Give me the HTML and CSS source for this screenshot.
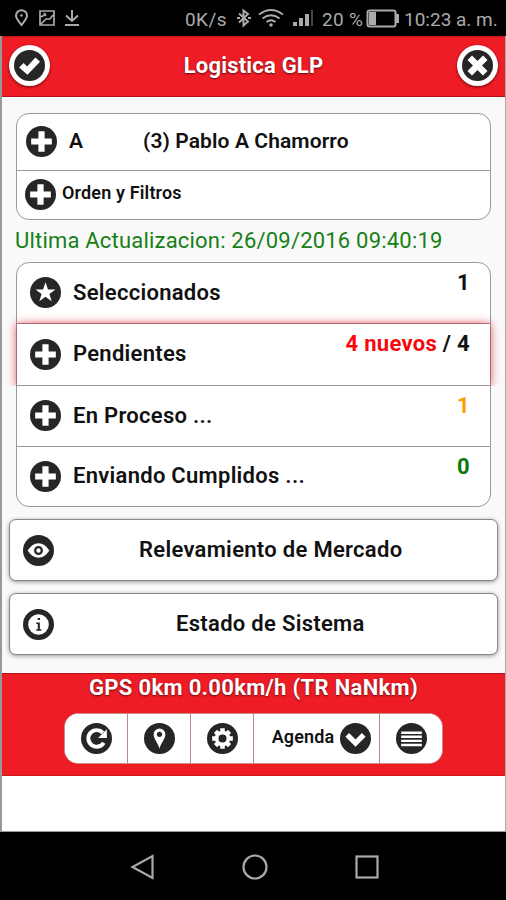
FILE: index.html
```html
<!DOCTYPE html>
<html lang="es">
<head>
<meta charset="utf-8">
<title>Logistica GLP</title>
<link rel="stylesheet" href="styles.css">
</head>
<body>
<svg width="0" height="0" class="defs">
  <symbol id="plus" viewBox="0 0 30 30"><circle cx="15" cy="15" r="15" fill="#262626"/><path d="M12 5h6v7h7v6h-7v7h-6v-7H5v-6h7z" fill="#fff"/></symbol>
  <symbol id="star" viewBox="0 0 30 30"><circle cx="15" cy="15" r="15" fill="#262626"/><path d="M15 5l2.400 7h7.300l-5.900 4.400 2.200 7.100-6-4.300-6 4.300 2.200-7.100L5.300 12h7.300z" fill="#fff"/></symbol>
  <symbol id="check" viewBox="0 0 30 30"><circle cx="15" cy="15" r="15" fill="#262626"/><path d="M5 17l4.300-4.300 3.400 3.200 8-8.600 4.500 4L13 24z" fill="#fff"/></symbol>
  <symbol id="cross" viewBox="0 0 30 30"><circle cx="15" cy="15" r="15" fill="#262626"/><path d="M7.500 7.500l15 15M22.500 7.500l-15 15" stroke="#fff" stroke-width="6.200"/></symbol>
  <symbol id="eye" viewBox="0 0 30 30"><circle cx="15" cy="15" r="15" fill="#262626"/><path d="M4.500 15Q9 8 15 8t10.500 7Q21 22 15 22T4.500 15z" fill="#fff"/><circle cx="15" cy="15" r="3.200" fill="#fff" stroke="#262626" stroke-width="2.200"/></symbol>
  <symbol id="info" viewBox="0 0 30 30"><circle cx="15" cy="15" r="12.500" fill="#fff" stroke="#262626" stroke-width="5"/><path d="M14.200 8.700h2.300v2h-2.300zM12.800 13h3.500v6.700h1.500V21h-5v-1.300h1.500v-5.300h-1.500z" fill="#262626"/></symbol>
  <symbol id="reload" viewBox="0 0 30 30"><circle cx="15" cy="15" r="15" fill="#262626"/><path d="M22 19A8 8 0 1 1 21 9.500" fill="none" stroke="#fff" stroke-width="3.800"/><path d="M25 6v8.500h-8.500z" fill="#fff"/></symbol>
  <symbol id="pin" viewBox="0 0 30 30"><circle cx="15" cy="15" r="15" fill="#262626"/><path d="M15 25C13.500 19 9.300 15.500 9.300 11a5.700 5.700 0 0 1 11.400 0c0 4.500-4.200 8-5.700 14z" fill="#fff"/><circle cx="15" cy="11" r="2.500" fill="#262626"/></symbol>
  <symbol id="gear" viewBox="0 0 30 30"><circle cx="15" cy="15" r="15" fill="#262626"/><g stroke="#fff" stroke-width="4.400"><path d="M15 5v20M5 15h20M8.200 8.200l13.600 13.600M21.800 8.200L8.200 21.800"/></g><circle cx="15" cy="15" r="5.700" fill="#262626" stroke="#fff" stroke-width="3.600"/></symbol>
  <symbol id="down" viewBox="0 0 30 30"><circle cx="15" cy="15" r="15" fill="#262626"/><path d="M7 11.500l8 8 8-8" fill="none" stroke="#fff" stroke-width="5"/></symbol>
  <symbol id="bars" viewBox="0 0 30 30"><circle cx="15" cy="15" r="15" fill="#262626"/><path d="M5 9.500h20M5 13.400h20M5 17.300h20M5 21.200h20" stroke="#fff" stroke-width="2.400"/></symbol>
</svg>

<div class="status">
  <svg class="status-left" width="66" height="18" viewBox="0 0 66 18" fill="none" stroke="#aaa" stroke-width="2">
    <path d="M7.500 16C5 12.500 2 9.500 2 6.700a5.500 5.500 0 0 1 11 0C13 9.500 10 12.500 7.500 16z"/><circle cx="7.500" cy="6.500" r="1.300" fill="#aaa" stroke="none"/>
    <path d="M26 2h14v14H26zM27 15l5-5h4l3-4M27 8l5-3M30 4l2 3" stroke-width="1.700"/>
    <path d="M58 1v10M52 6.500l6 5.500 6-5.500M51 16h14"/>
  </svg>
  <span class="speed">0K/s</span>
  <svg class="bt" width="14" height="20" viewBox="0 0 14 20" fill="none" stroke="#aaa" stroke-width="2"><path d="M2 5.500l9 8-4.500 4V2.500L11 6l-9 8.500M0 10h3M11 10h3"/></svg>
  <svg class="wifi" width="26" height="20" viewBox="0 0 26 20" fill="none" stroke="#aaa" stroke-width="2"><path d="M1 6.500q12-9 24 0M4.500 10.500q8.500-6.500 17 0M8.500 14q4.500-3.500 9 0"/><circle cx="13" cy="17" r="1.800" fill="#aaa" stroke="none"/></svg>
  <svg class="signal" width="22" height="18" viewBox="0 0 22 18"><path d="M1 13h4v4H1zM7 9h4v8H7zM13 5h4v12h-4z" fill="#aaa"/><path d="M19 1h2v16h-2z" fill="#444"/></svg>
  <span class="percent">20 %</span>
  <svg class="battery" width="34" height="19" viewBox="0 0 34 19"><rect x="1.500" y="1.500" width="28" height="16" rx="2" fill="none" stroke="#aaa" stroke-width="2"/><path d="M3 3h7v13H3zM30 5h3v9h-3z" fill="#aaa"/></svg>
  <span class="time">10:23 a. m.</span>
</div>

<div class="app">
  <header class="header">
    <button class="round"><svg class="icon"><use href="#check"/></svg></button>
    <h1>Logistica GLP</h1>
    <button class="round"><svg class="icon"><use href="#cross"/></svg></button>
  </header>

  <main class="content">
    <section class="group filters">
      <div class="row user"><svg class="icon"><use href="#plus"/></svg><span class="initial">A</span><span class="name">(3) Pablo A Chamorro</span></div>
      <div class="row order"><svg class="icon"><use href="#plus"/></svg><span class="label">Orden y Filtros</span></div>
    </section>
    <p class="updated">Ultima Actualizacion: 26/09/2016 09:40:19</p>
    <section class="group lists">
      <div class="row"><svg class="icon"><use href="#star"/></svg><span class="label">Seleccionados</span><span class="count">1</span></div>
      <div class="row active"><svg class="icon"><use href="#plus"/></svg><span class="label">Pendientes</span><span class="count"><span class="new">4 nuevos</span> / 4</span></div>
      <div class="row"><svg class="icon"><use href="#plus"/></svg><span class="label">En Proceso ...</span><span class="count orange">1</span></div>
      <div class="row"><svg class="icon"><use href="#plus"/></svg><span class="label">Enviando Cumplidos ...</span><span class="count green">0</span></div>
    </section>
    <button class="wide"><svg class="icon"><use href="#eye"/></svg><span class="market">Relevamiento de Mercado</span></button>
    <button class="wide"><svg class="icon"><use href="#info"/></svg><span class="system">Estado de Sistema</span></button>
  </main>

  <footer class="footer">
    <div class="gps">GPS 0km 0.00km/h (TR NaNkm)</div>
    <div class="toolbar">
      <button><svg class="icon"><use href="#reload"/></svg></button>
      <button><svg class="icon"><use href="#pin"/></svg></button>
      <button><svg class="icon"><use href="#gear"/></svg></button>
      <button class="agenda"><span>Agenda</span><svg class="icon"><use href="#down"/></svg></button>
      <button><svg class="icon"><use href="#bars"/></svg></button>
    </div>
  </footer>
</div>

<nav class="nav">
  <svg width="26" height="28" viewBox="0 0 26 28"><path d="M22.500 3v22L2.500 14z"/></svg>
  <svg width="26" height="28" viewBox="0 0 26 28"><circle cx="13" cy="14" r="11.500"/></svg>
  <svg width="26" height="28" viewBox="0 0 26 28"><rect x="2.500" y="3.500" width="21" height="21"/></svg>
</nav>
</body>
</html>
```

FILE: styles.css
```css
* { box-sizing: border-box; }
body { margin: 0; width: 506px; height: 900px; overflow: hidden; background: #000; font-family: Roboto, sans-serif; color: #111; display: flex; flex-direction: column; }
.defs { display: none; }
button { border: 0; padding: 0; margin: 0; background: #fff; font: inherit; color: inherit; }
.icon { width: 31px; height: 31px; flex: none; display: block; }

.status { height: 36px; flex: none; display: flex; align-items: center; color: #aaa; font-size: 19px; white-space: nowrap; }
.status-left { margin-left: 14px; }
.speed { margin-left: 105px; width: 47px; padding-top: 2px; letter-spacing: .4px; }
.bt { margin-left: 5px; }
.wifi { margin-left: 7px; }
.signal { margin-left: 8px; }
.percent { margin-left: 8px; width: 44px; padding-top: 2px; letter-spacing: .3px; }
.time { margin-left: 4px; padding-top: 2px; }

.app { height: 796px; flex: none; background: #fff; border-left: 2px solid #999; border-right: 1px solid #aaa; border-bottom: 1px solid #999; }
.header { height: 61px; background: #ee1c25; border-top: 1px solid #c4151c; border-bottom: 1px solid #b3121a; display: flex; align-items: center; justify-content: space-between; padding: 0 7px 2px; }
.round { width: 41px; height: 41px; border-radius: 50%; display: grid; place-items: center; box-shadow: 0 1px 3px rgba(0,0,0,.6); }
h1, .gps { margin: 0; font-size: 22px; font-weight: 700; color: #fff; text-shadow: 0 1px 2px rgba(0,0,0,.6); white-space: nowrap; letter-spacing: .2px; }

.content { height: 576px; background: #f9f9f9; padding-top: 16px; }
.group { margin: 0 14px; border: 1px solid #999; border-radius: 13px; background: #fff; }
.row { display: flex; align-items: center; position: relative; font-weight: 600; font-size: 22px; white-space: nowrap; border-bottom: 1px solid #999; }
.row:last-child { border-bottom: 0; }
.filters { height: 107px; }
.user { height: 57px; padding-left: 9px; padding-bottom: 2px; }
.order { height: 48px; padding-left: 8px; padding-bottom: 2px; }
.initial { margin-left: 12px; width: 74px; font-size: 21px; }
.name { font-size: 21px; letter-spacing: .1px; }
.order .label { margin-left: 6px; font-size: 18px; padding-bottom: 3px; letter-spacing: .15px; }
.updated { margin: 0 0 0 13px; height: 43px; line-height: 42px; font-size: 22px; color: #168016; white-space: nowrap; letter-spacing: .2px; }
.lists { height: 245px; margin-top: -1px; }
.lists .row { height: 61px; padding: 0 20px 1px 13px; }
.lists .label { margin-left: 12px; letter-spacing: .28px; padding-bottom: 1px; }
.lists .row:last-child { padding-bottom: 3px; }
.lists .active { height: 62px; background: #fff; box-shadow: 0 0 9px rgba(215,20,35,.8); clip-path: inset(-12px -12px 0 -12px); }
.count { margin-left: auto; align-self: flex-start; padding-top: 7px; line-height: 26px; color: #111; font-size: 22px; font-weight: 700; letter-spacing: .3px; }
.new { color: #f5090c; }
.orange { color: #ffa000; }
.green { color: #087a08; }

.wide { display: flex; align-items: center; width: 489px; height: 62px; margin: 12px 0 0 7px; border: 1px solid #888; border-radius: 7px; box-shadow: 0 1px 4px rgba(0,0,0,.4); padding: 0 0 0 13px; font-size: 22px; font-weight: 600; white-space: nowrap; letter-spacing: .3px; }
.wide + .wide { margin-top: 12px; }
.wide span { padding-bottom: 1px; }
.market { margin-left: 85px; }
.system { margin-left: 122px; }

.footer { height: 103px; background: #ee1c25; border-top: 1px solid #b3121a; border-bottom: 1px solid #d0151e; }
.gps { height: 39px; line-height: 28px; padding-left: 87px; letter-spacing: .32px; }
.toolbar { width: 379px; height: 51px; margin-left: 62px; border-radius: 14px; overflow: hidden; display: grid; grid-template-columns: 63px 63px 63px 126px 62px; background: #fff; border: 1px solid #c98a8a; }
.toolbar button { display: flex; align-items: center; justify-content: center; border-right: 1px solid #b88; }
.toolbar button:last-child { border-right: 0; }
.toolbar .agenda { font-size: 18px; font-weight: 600; }
.agenda span { width: 64px; margin-right: 5px; margin-left: 9px; padding-bottom: 4px; letter-spacing: .15px; }

.nav { height: 68px; display: flex; justify-content: center; gap: 86px; padding-top: 21px; padding-left: 3px; }
.nav svg { fill: none; stroke: #aaa; stroke-width: 2.200; }
```
